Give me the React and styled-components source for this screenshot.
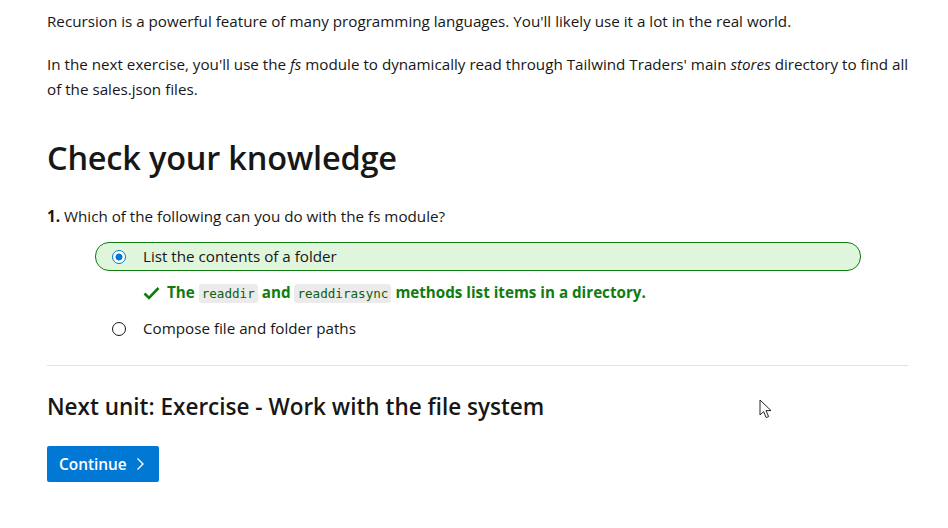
import styled, { createGlobalStyle } from "styled-components";

const GlobalStyle = createGlobalStyle`
  body {
    margin: 0;
    background: #ffffff;
    font-family: "Open Sans", "Noto Sans", sans-serif;
    color: #171717;
  }
`;

function App() {
  return (
    <Page>
      <GlobalStyle />
      <Paragraph>
        Recursion is a powerful feature of many programming languages. You'll likely use it a lot in the real world.
      </Paragraph>
      <Paragraph>
        In the next exercise, you'll use the <em>fs</em> module to dynamically read through Tailwind Traders' main{" "}
        <em>stores</em> directory to find all of the sales.json files.
      </Paragraph>

      <Heading>Check your knowledge</Heading>

      <Question>
        <b>1.</b> Which of the following can you do with the fs module?
      </Question>

      <Options>
        <Option selected>
          <Radio selected />
          List the contents of a folder
        </Option>
        <Feedback>
          <svg width="17" height="14" viewBox="0 0 17 14">
            <path d="M1.5 7.5 L6 12 L15.5 2" fill="none" stroke="#107c10" strokeWidth="2.6" />
          </svg>
          <span>
            The <Code>readdir</Code> and <Code>readdirasync</Code> methods list items in a directory.
          </span>
        </Feedback>
        <Option>
          <Radio />
          Compose file and folder paths
        </Option>
      </Options>

      <Divider />

      <NextTitle>Next unit: Exercise - Work with the file system</NextTitle>
      <Button>
        Continue
        <svg width="10" height="14" viewBox="0 0 10 14">
          <path d="M2.5 1.5 L8 7 L2.5 12.5" fill="none" stroke="#ffffff" strokeWidth="1.4" />
        </svg>
      </Button>

      <Cursor width="14" height="22" viewBox="0 0 14 22">
        <path
          d="M1 1 L1 16 L4.6 12.6 L7.2 18.6 L9.6 17.6 L7 11.6 L12 11.6 Z"
          fill="#ffffff"
          stroke="#222"
          strokeWidth="1"
          strokeLinejoin="round"
        />
      </Cursor>
    </Page>
  );
}

const Page = styled.div`
  position: relative;
  width: 861px;
  padding: 9px 0 40px 47px;
  font-size: 15.2px;
  line-height: 25px;
`;

const Paragraph = styled.p`
  margin: 0 -16px 18px 0;
`;

const Heading = styled.h2`
  margin: 34px 0 0;
  font-size: 32.5px;
  line-height: 44px;
  font-weight: 600;
  letter-spacing: -0.2px;
`;

const Question = styled.p`
  margin: 24px 0 0;
  b {
    font-weight: 700;
  }
`;

const Options = styled.div`
  margin: 13px 0 0 48px;
  width: 766px;
  display: flex;
  flex-direction: column;
`;

const Option = styled.div`
  display: flex;
  align-items: center;
  gap: 17px;
  height: 27px;
  padding-left: 17px;
  border: 1px solid ${(p) => (p.selected ? "#107c10" : "transparent")};
  border-radius: 14px;
  background: ${(p) => (p.selected ? "#dff6dd" : "transparent")};
`;

const Radio = styled.span`
  width: 14px;
  height: 14px;
  margin-left: -1px;
  border-radius: 50%;
  border: 1.5px solid ${(p) => (p.selected ? "#0078d4" : "#171717")};
  box-sizing: border-box;
  flex: none;
  background: ${(p) => (p.selected ? "radial-gradient(circle, #0078d4 3.2px, #ffffff 3.8px)" : "#fff")};
`;

const Feedback = styled.div`
  display: flex;
  align-items: center;
  gap: 7px;
  height: 44px;
  padding-left: 48px;
  color: #107c10;
  font-weight: 700;
  margin-bottom: -1px;
`;

const Code = styled.code`
  font-family: "DejaVu Sans Mono", monospace;
  font-size: 12.6px;
  font-weight: 400;
  background: #ebebeb;
  color: #0e5e0e;
  padding: 2px 3px;
  border-radius: 3px;
`;

const Divider = styled.hr`
  margin: 22px 0 0;
  border: none;
  border-top: 1px solid #e1e1e1;
`;

const NextTitle = styled.h3`
  margin: 26px 0 0;
  font-size: 22.5px;
  line-height: 30px;
  font-weight: 600;
`;

const Button = styled.button`
  margin-top: 24px;
  display: inline-flex;
  align-items: center;
  gap: 8px;
  height: 36px;
  padding: 0 14px 0 12px;
  border: none;
  border-radius: 2px;
  background: #0078d4;
  color: #ffffff;
  font-family: "Open Sans", "Noto Sans", sans-serif;
  font-size: 15.4px;
  font-weight: 600;
`;

const Cursor = styled.svg`
  position: absolute;
  left: 759px;
  top: 399px;
`;

export default App;
